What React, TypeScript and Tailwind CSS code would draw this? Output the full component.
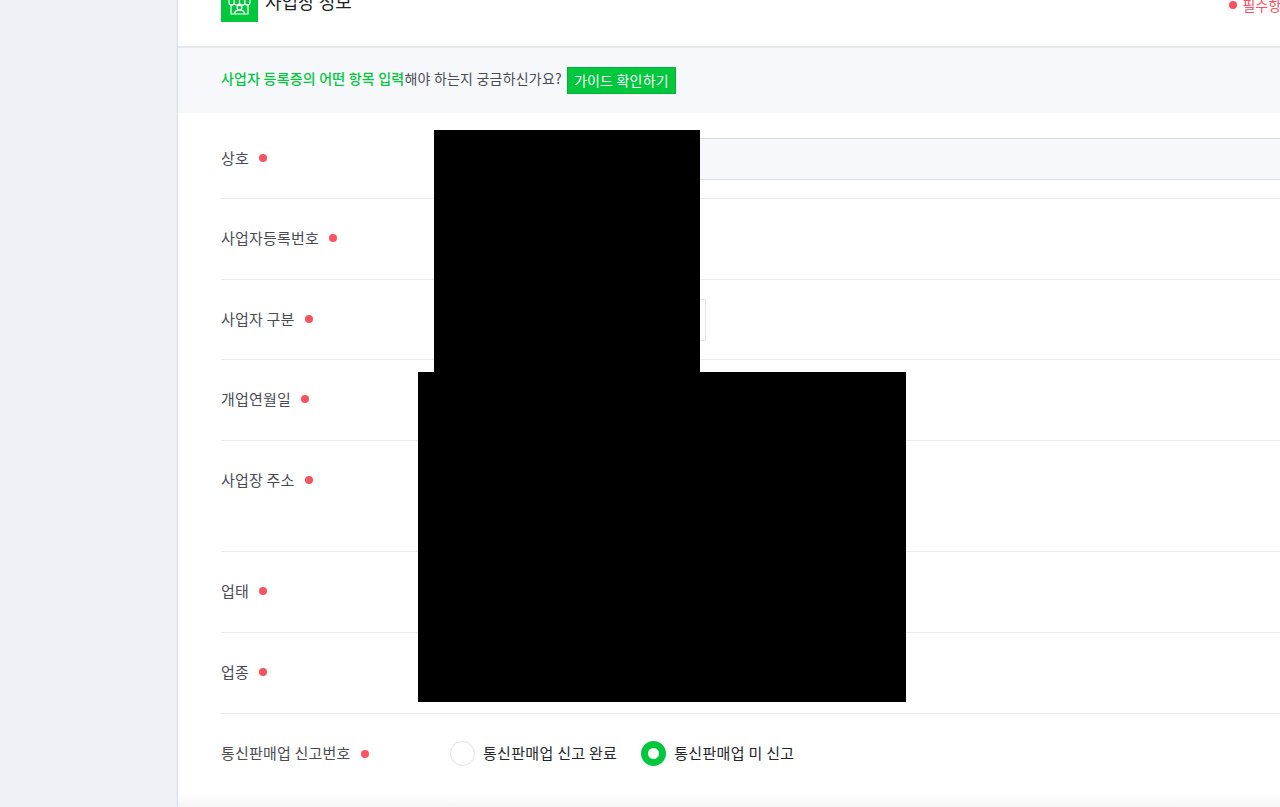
const font = '[font-family:"Noto_Sans_CJK_KR","Noto_Sans",sans-serif]';

function Dot() {
  return <span className="ml-[10px] inline-block h-[8px] w-[8px] rounded-full bg-[#f9515f]" />;
}

function Row({ label, h, children }: { label: string; h: string; children?: React.ReactNode }) {
  return (
    <div className={`flex border-b border-[#e8ebf1] ${h}`}>
      <div className="flex h-[78px] w-[229px] shrink-0 items-center text-[15px] tracking-[0.2px] text-[#4a4c55]">
        {label}
        <Dot />
      </div>
      <div className="flex h-[80px] flex-1 items-center">{children}</div>
    </div>
  );
}

function StoreIcon() {
  return (
    <svg width="37" height="37" viewBox="0 0 37 37" className="shrink-0">
      <rect width="37" height="37" fill="#00c73c" />
      <g fill="none" stroke="#fff" strokeWidth="1.2">
        <path d="M10 19v10h17V19" />
        <path d="M8 11h21v6.5a2.6 2.6 0 0 1-5.2 0 2.6 2.6 0 0 1-5.3 0 2.6 2.6 0 0 1-5.3 0 2.6 2.6 0 0 1-5.2 0z" />
        <path d="M13.2 11v6.5M18.5 11v6.5M23.8 11v6.5" />
        <circle cx="18.5" cy="22.5" r="2.4" />
        <path d="M13.5 29c0-2.4 2-3.8 5-3.8s5 1.4 5 3.8" />
      </g>
    </svg>
  );
}

function Radio({ on, label }: { on?: boolean; label: string }) {
  return (
    <div className="flex items-center gap-2">
      <span
        className={
          on
            ? 'h-[25px] w-[25px] rounded-full border-[7px] border-[#00c73c] bg-white'
            : 'h-[25px] w-[25px] rounded-full border border-[#dfe2ea] bg-white'
        }
      />
      <span className="text-[15px] tracking-[0.3px] text-[#24262c]">{label}</span>
    </div>
  );
}

export default function App() {
  return (
    <div className={`flex h-[807px] w-[1280px] overflow-hidden bg-white ${font}`}>
      <aside className="w-[178px] shrink-0 border-r border-[#d9dde5] bg-[#edf0f4]" />

      <main className="relative w-[1140px] shrink-0">
        <header className="flex h-[48px] items-end justify-between border-b-2 border-[#e6e9f1] pb-[24px] pl-[43px] pr-[24px]">
          <div className="flex items-center gap-[7px]">
            <StoreIcon />
            <h2 className="mb-[6px] text-[18px] leading-[26px] text-[#1e1f24]">사업장 정보</h2>
          </div>
          <div className="mb-[7px] flex items-center gap-[5px] text-[14px] leading-[20px] text-[#f9515f]">
            <span className="h-[8px] w-[8px] rounded-full bg-[#f9515f]" />
            필수항목
          </div>
        </header>

        <div className="flex h-[65px] items-center bg-[#f7f8fc] pl-[43px] text-[14px] tracking-[0.2px] text-[#4a4c55]">
          <span className="mb-[5px] font-medium text-[#00c73c]">사업자 등록증의 어떤 항목 입력</span>
          <span className="mb-[5px]">해야 하는지 궁금하신가요?</span>
          <button className="ml-[5px] h-[27px] w-[109px] border border-[#00b336] bg-[#00c73c] text-[14px] text-white">
            가이드 확인하기
          </button>
        </div>

        <div className="pl-[43px]">
          <Row label="상호" h="h-[86px] pt-[6px]">
            <div className="h-[42px] flex-1 border-y border-[#dcdee6] bg-[#f7f8fc]" />
          </Row>
          <Row label="사업자등록번호" h="h-[81px]" />
          <Row label="사업자 구분" h="h-[80px]">
            <div className="ml-[50px] h-[42px] w-[206px] border border-[#e4e6ec]" />
          </Row>
          <Row label="개업연월일" h="h-[81px]" />
          <Row label="사업장 주소" h="h-[111px]" />
          <Row label="업태" h="h-[81px]" />
          <Row label="업종" h="h-[81px]" />
          <div className="flex h-[79px] items-center">
            <div className="flex w-[229px] shrink-0 items-center text-[15px] tracking-[0.2px] text-[#4a4c55]">
              통신판매업 신고번호
              <Dot />
            </div>
            <div className="flex items-center gap-6">
              <Radio label="통신판매업 신고 완료" />
              <Radio on label="통신판매업 미 신고" />
            </div>
          </div>
          <div className="ml-[229px] mt-[13px] h-px w-[725px] bg-[#dfe2ea]" />
        </div>

        {/* redaction blocks in the source picture */}
        <div className="absolute left-[256px] top-[130px] h-[242px] w-[266px] bg-black" />
        <div className="absolute left-[240px] top-[372px] h-[330px] w-[488px] bg-black" />
        <div className="absolute bottom-0 left-0 h-[14px] w-full bg-gradient-to-b from-transparent to-[#f6f6f6]" />
      </main>
    </div>
  );
}
